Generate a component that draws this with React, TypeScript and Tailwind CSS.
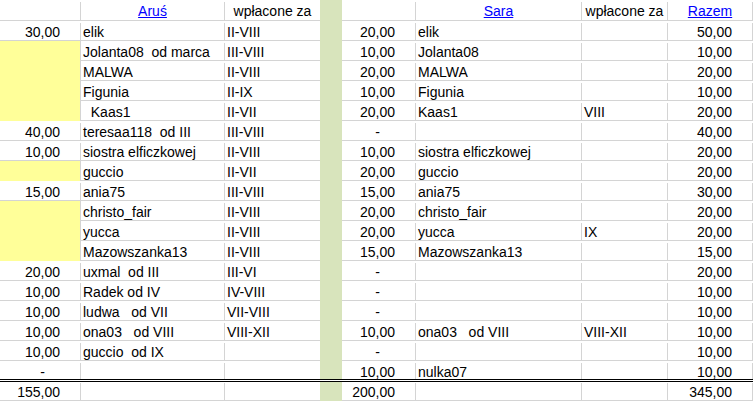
type Row = {
  a: string | null // null = yellow cell
  name: string
  months: string
  s: string
  sName: string
  sMonths: string
  total: string
}

const rows: Row[] = [
  { a: '30,00', name: 'elik', months: 'II-VIII', s: '20,00', sName: 'elik', sMonths: '', total: '50,00' },
  { a: null, name: 'Jolanta08  od marca', months: 'III-VIII', s: '10,00', sName: 'Jolanta08', sMonths: '', total: '10,00' },
  { a: null, name: 'MALWA', months: 'II-VIII', s: '20,00', sName: 'MALWA', sMonths: '', total: '20,00' },
  { a: null, name: 'Figunia', months: 'II-IX', s: '10,00', sName: 'Figunia', sMonths: '', total: '10,00' },
  { a: null, name: '  Kaas1', months: 'II-VII', s: '20,00', sName: 'Kaas1', sMonths: 'VIII', total: '20,00' },
  { a: '40,00', name: 'teresaa118  od III', months: 'III-VIII', s: '-', sName: '', sMonths: '', total: '40,00' },
  { a: '10,00', name: 'siostra elficzkowej', months: 'II-VIII', s: '10,00', sName: 'siostra elficzkowej', sMonths: '', total: '20,00' },
  { a: null, name: 'guccio', months: 'II-VII', s: '20,00', sName: 'guccio', sMonths: '', total: '20,00' },
  { a: '15,00', name: 'ania75', months: 'III-VIII', s: '15,00', sName: 'ania75', sMonths: '', total: '30,00' },
  { a: null, name: 'christo_fair', months: 'II-VIII', s: '20,00', sName: 'christo_fair', sMonths: '', total: '20,00' },
  { a: null, name: 'yucca', months: 'II-VIII', s: '20,00', sName: 'yucca', sMonths: 'IX', total: '20,00' },
  { a: null, name: 'Mazowszanka13', months: 'II-VIII', s: '15,00', sName: 'Mazowszanka13', sMonths: '', total: '15,00' },
  { a: '20,00', name: 'uxmal  od III', months: 'III-VI', s: '-', sName: '', sMonths: '', total: '20,00' },
  { a: '10,00', name: 'Radek od IV', months: 'IV-VIII', s: '-', sName: '', sMonths: '', total: '10,00' },
  { a: '10,00', name: 'ludwa   od VII', months: 'VII-VIII', s: '-', sName: '', sMonths: '', total: '10,00' },
  { a: '10,00', name: 'ona03   od VIII', months: 'VIII-XII', s: '10,00', sName: 'ona03   od VIII', sMonths: 'VIII-XII', total: '10,00' },
  { a: '10,00', name: 'guccio  od IX', months: '', s: '-', sName: '', sMonths: '', total: '10,00' },
  { a: '-', name: '', months: '', s: '10,00', sName: 'nulka07', sMonths: '', total: '10,00' },
]

// one numeric cell, right aligned like Excel's accounting format
function Num({ value, w }: { value: string; w: string }) {
  const dash = value === '-'
  return (
    <div className={`${w} shrink-0 border-r border-[#d4d4d4] text-right ${dash ? 'pr-[35px]' : 'pr-[20px]'}`}>
      {value}
    </div>
  )
}

function Text({ value, w, border = true }: { value: string; w: string; border?: boolean }) {
  return (
    <div className={`${w} shrink-0 pl-[2px] whitespace-pre overflow-hidden ${border ? 'border-r border-[#d4d4d4]' : ''}`}>
      {value}
    </div>
  )
}

function DataRow({ row, last }: { row: Row; last: boolean }) {
  const rowCls = last
    ? 'h-[21px] border-b-[3px] border-double border-black'
    : 'h-[20px] border-b border-[#d4d4d4]'
  return (
    <div className={`flex ${rowCls} pt-[2px] leading-[18px]`}>
      {row.a === null ? (
        <div className="w-[81px] shrink-0 -mt-[2px] -mb-[1px] bg-[#ffff99] border-r border-[#d4d4d4]" />
      ) : (
        <Num value={row.a} w="w-[81px]" />
      )}
      <Text value={row.name} w="w-[144px]" />
      <Text value={row.months} w="w-[95px]" border={false} />
      <div className={`w-[22px] shrink-0 -mt-[2px] bg-[#d8e4bc] ${last ? '' : '-mb-[1px]'}`} />
      <Num value={row.s} w="w-[74px]" />
      <Text value={row.sName} w="w-[166px]" />
      <Text value={row.sMonths} w="w-[86px]" />
      <Num value={row.total} w="w-[85px]" />
    </div>
  )
}

export default function App() {
  return (
    <div className="w-[753px] h-[401px] overflow-hidden bg-white text-black text-[14px] font-['Liberation_Sans',Arial,sans-serif]">
      {/* header */}
      <div className="flex h-[21px] border-b border-[#d4d4d4] pt-[2px] leading-[18px]">
        <div className="w-[81px] shrink-0 border-r border-[#d4d4d4]" />
        <div className="w-[144px] shrink-0 border-r border-[#d4d4d4] text-center">
          <span className="text-[#0000ff] underline">Aruś</span>
        </div>
        <div className="w-[95px] shrink-0 text-center">wpłacone za</div>
        <div className="w-[22px] shrink-0 -mt-[2px] -mb-[1px] bg-[#d8e4bc]" />
        <div className="w-[74px] shrink-0 border-r border-[#d4d4d4]" />
        <div className="w-[166px] shrink-0 border-r border-[#d4d4d4] text-center">
          <span className="text-[#0000ff] underline">Sara</span>
        </div>
        <div className="w-[86px] shrink-0 border-r border-[#d4d4d4] text-center">wpłacone za</div>
        <div className="w-[85px] shrink-0 border-r border-[#d4d4d4] text-center">
          <span className="text-[#0000ff] underline">Razem</span>
        </div>
      </div>

      {rows.map((row, i) => (
        <DataRow key={i} row={row} last={i === rows.length - 1} />
      ))}

      {/* sums */}
      <div className="flex h-[19px] border-b border-[#d4d4d4] pt-[1px] leading-[18px]">
        <Num value="155,00" w="w-[81px]" />
        <Text value="" w="w-[144px]" />
        <Text value="" w="w-[95px]" border={false} />
        <div className="w-[22px] shrink-0 -mt-[1px] -mb-[1px] bg-[#d8e4bc]" />
        <Num value="200,00" w="w-[74px]" />
        <Text value="" w="w-[166px]" />
        <Text value="" w="w-[86px]" />
        <Num value="345,00" w="w-[85px]" />
      </div>
    </div>
  )
}
